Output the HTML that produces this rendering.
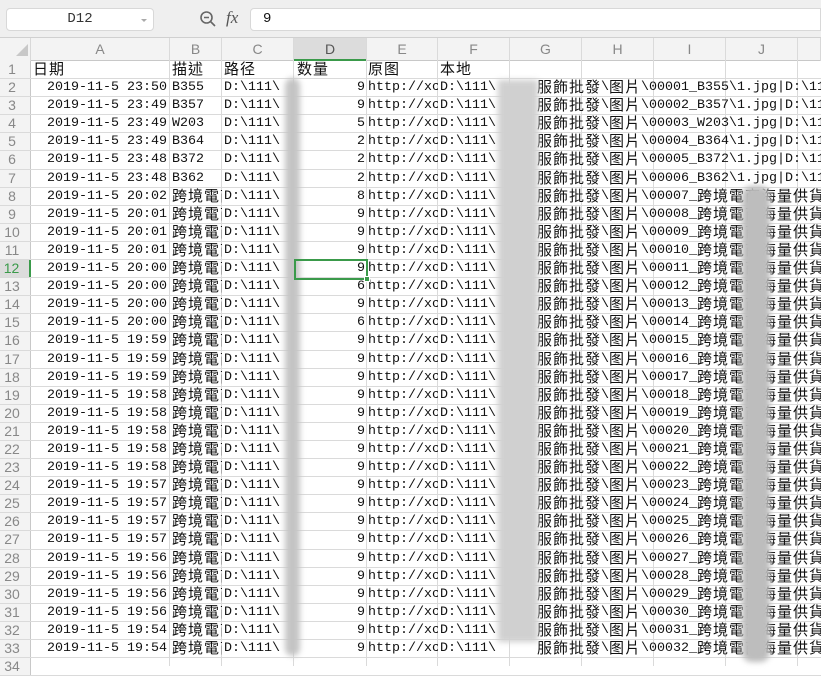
<!DOCTYPE html>
<html><head><meta charset="utf-8"><style>
*{margin:0;padding:0;box-sizing:border-box}
body{width:821px;height:666px;overflow:hidden;background:#fff;position:relative;font-family:"Liberation Mono","Noto Sans CJK TC",monospace;font-size:13.33px;color:#111}
.top{position:absolute;left:0;top:0;width:821px;height:38px;background:#efefef;border-bottom:1px solid #d0d0d0}
.nb{position:absolute;left:6px;top:8px;width:148px;height:23px;background:#fff;border:1px solid #d8d8d8;border-radius:4px;line-height:21px;text-align:center;font-size:14px;color:#333}
.nb:after{content:"";position:absolute;right:6px;top:10px;border:3px solid transparent;border-top-color:#aaa}
.fx{position:absolute;left:226px;top:8px;font-family:"Liberation Serif",serif;font-style:italic;font-size:17px;color:#555}
.fb{position:absolute;left:250px;top:8px;width:571px;height:23px;background:#fff;border:1px solid #d8d8d8;border-radius:4px 0 0 4px;line-height:21px;padding-left:12px;font-size:14px}
.hd{position:absolute;left:0;top:38px;width:821px;height:23px;background:#f3f3f3;border-bottom:1px solid #c8c8c8}
.hd span{position:absolute;top:0;height:23px;line-height:22px;text-align:center;font-family:"Liberation Sans",sans-serif;font-size:14px;color:#888;border-right:1px solid #d8d8d8}
.rows{position:absolute;left:0;top:61px;width:821px}
.r{position:relative;height:18.1px;border-bottom:1px solid #dadada;line-height:17px;overflow:hidden}
.r s{position:absolute;left:0;top:0;width:31px;height:100%;background:#f3f3f3;border-right:1px solid #c8c8c8;text-decoration:none;text-align:center;font-family:"Liberation Sans",sans-serif;font-size:14px;color:#888;padding-right:6px}
.r i{position:absolute;top:0;height:17px;font-style:normal;white-space:nowrap;overflow:hidden}
.a{left:31px;width:136px;text-align:right}
.b{left:172px;width:50px}
.c{left:224px;width:70px}
.d{left:294px;width:71px;text-align:right}
.e{left:368px;width:70px}
.f{left:440px}
.r i.g{left:537px;overflow:visible}
u{text-decoration:none;font-family:"Noto Sans CJK TC",sans-serif;font-size:15px;letter-spacing:1px;line-height:1;vertical-align:top;position:relative;top:0px}
.vl{position:absolute;top:38px;width:1px;height:628px;background:#dadada}
.bl{position:absolute;filter:blur(3px);background:#c4c4c4}
</style></head><body>
<div class="top">
<div class="nb">D12</div>
<svg style="position:absolute;left:199px;top:10px" width="18" height="18" viewBox="0 0 18 18"><circle cx="7.5" cy="7.5" r="5.5" fill="none" stroke="#666" stroke-width="1.6"/><path d="M11.5 11.5L16 16M5 7.5h5" stroke="#666" stroke-width="1.6"/></svg>
<div class="fx">fx</div>
<div class="fb">9</div>
</div>
<div class="hd">
<span style="left:0;width:31px;background:#f3f3f3"></span>
<span style="left:31px;width:139px">A</span><span style="left:170px;width:52px">B</span><span style="left:222px;width:72px">C</span><span style="left:294px;width:73px;background:#dcdcdc;color:#555;border-bottom:2px solid #3a9a4a">D</span><span style="left:367px;width:71px">E</span><span style="left:438px;width:72px">F</span><span style="left:510px;width:72px">G</span><span style="left:582px;width:72px">H</span><span style="left:654px;width:72px">I</span><span style="left:726px;width:72px">J</span><span style="left:798px;width:23px"></span>
</div>
<svg style="position:absolute;left:16px;top:44px" width="12" height="12"><path d="M12 0V12H0Z" fill="#c8c8c8"/></svg>
<div class="vl" style="left:169px"></div><div class="vl" style="left:221px"></div><div class="vl" style="left:293px"></div><div class="vl" style="left:366px"></div><div class="vl" style="left:437px"></div><div class="vl" style="left:509px"></div><div class="vl" style="left:581px"></div><div class="vl" style="left:653px"></div><div class="vl" style="left:725px"></div><div class="vl" style="left:797px"></div>
<div class="rows">
<div class="r"><s>1</s><i style="left:33px"><u>日期</u></i><i class="b"><u>描述</u></i><i class="c"><u>路径</u></i><i style="left:297px"><u>数量</u></i><i class="e"><u>原图</u></i><i class="f"><u>本地</u></i></div>
<div class="r"><s>2</s><i class="a">2019-11-5 23:50</i><i class="b">B355</i><i class="c">D:\111\</i><i class="d">9</i><i class="e">http://xc</i><i class="f">D:\111\</i><i class="g"><u>服飾批發</u>\<u>图片</u>\00001_B355\1.jpg|D:\111\</i></div>
<div class="r"><s>3</s><i class="a">2019-11-5 23:49</i><i class="b">B357</i><i class="c">D:\111\</i><i class="d">9</i><i class="e">http://xc</i><i class="f">D:\111\</i><i class="g"><u>服飾批發</u>\<u>图片</u>\00002_B357\1.jpg|D:\111\</i></div>
<div class="r"><s>4</s><i class="a">2019-11-5 23:49</i><i class="b">W203</i><i class="c">D:\111\</i><i class="d">5</i><i class="e">http://xc</i><i class="f">D:\111\</i><i class="g"><u>服飾批發</u>\<u>图片</u>\00003_W203\1.jpg|D:\111\</i></div>
<div class="r"><s>5</s><i class="a">2019-11-5 23:49</i><i class="b">B364</i><i class="c">D:\111\</i><i class="d">2</i><i class="e">http://xc</i><i class="f">D:\111\</i><i class="g"><u>服飾批發</u>\<u>图片</u>\00004_B364\1.jpg|D:\111\</i></div>
<div class="r"><s>6</s><i class="a">2019-11-5 23:48</i><i class="b">B372</i><i class="c">D:\111\</i><i class="d">2</i><i class="e">http://xc</i><i class="f">D:\111\</i><i class="g"><u>服飾批發</u>\<u>图片</u>\00005_B372\1.jpg|D:\111\</i></div>
<div class="r"><s>7</s><i class="a">2019-11-5 23:48</i><i class="b">B362</i><i class="c">D:\111\</i><i class="d">2</i><i class="e">http://xc</i><i class="f">D:\111\</i><i class="g"><u>服飾批發</u>\<u>图片</u>\00006_B362\1.jpg|D:\111\</i></div>
<div class="r"><s>8</s><i class="a">2019-11-5 20:02</i><i class="b"><u>跨境電商</u></i><i class="c">D:\111\</i><i class="d">8</i><i class="e">http://xc</i><i class="f">D:\111\</i><i class="g"><u>服飾批發</u>\<u>图片</u>\00007_<u>跨境電商海量供貨渠</u></i></div>
<div class="r"><s>9</s><i class="a">2019-11-5 20:01</i><i class="b"><u>跨境電商</u></i><i class="c">D:\111\</i><i class="d">9</i><i class="e">http://xc</i><i class="f">D:\111\</i><i class="g"><u>服飾批發</u>\<u>图片</u>\00008_<u>跨境電商海量供貨渠</u></i></div>
<div class="r"><s>10</s><i class="a">2019-11-5 20:01</i><i class="b"><u>跨境電商</u></i><i class="c">D:\111\</i><i class="d">9</i><i class="e">http://xc</i><i class="f">D:\111\</i><i class="g"><u>服飾批發</u>\<u>图片</u>\00009_<u>跨境電商海量供貨渠</u></i></div>
<div class="r"><s>11</s><i class="a">2019-11-5 20:01</i><i class="b"><u>跨境電商</u></i><i class="c">D:\111\</i><i class="d">9</i><i class="e">http://xc</i><i class="f">D:\111\</i><i class="g"><u>服飾批發</u>\<u>图片</u>\00010_<u>跨境電商海量供貨渠</u></i></div>
<div class="r"><s style="background:#dcdcdc;color:#3a9a4a;border-right:2px solid #3a9a4a">12</s><i class="a">2019-11-5 20:00</i><i class="b"><u>跨境電商</u></i><i class="c">D:\111\</i><i class="d">9</i><i class="e">http://xc</i><i class="f">D:\111\</i><i class="g"><u>服飾批發</u>\<u>图片</u>\00011_<u>跨境電商海量供貨渠</u></i></div>
<div class="r"><s>13</s><i class="a">2019-11-5 20:00</i><i class="b"><u>跨境電商</u></i><i class="c">D:\111\</i><i class="d">6</i><i class="e">http://xc</i><i class="f">D:\111\</i><i class="g"><u>服飾批發</u>\<u>图片</u>\00012_<u>跨境電商海量供貨渠</u></i></div>
<div class="r"><s>14</s><i class="a">2019-11-5 20:00</i><i class="b"><u>跨境電商</u></i><i class="c">D:\111\</i><i class="d">9</i><i class="e">http://xc</i><i class="f">D:\111\</i><i class="g"><u>服飾批發</u>\<u>图片</u>\00013_<u>跨境電商海量供貨渠</u></i></div>
<div class="r"><s>15</s><i class="a">2019-11-5 20:00</i><i class="b"><u>跨境電商</u></i><i class="c">D:\111\</i><i class="d">6</i><i class="e">http://xc</i><i class="f">D:\111\</i><i class="g"><u>服飾批發</u>\<u>图片</u>\00014_<u>跨境電商海量供貨渠</u></i></div>
<div class="r"><s>16</s><i class="a">2019-11-5 19:59</i><i class="b"><u>跨境電商</u></i><i class="c">D:\111\</i><i class="d">9</i><i class="e">http://xc</i><i class="f">D:\111\</i><i class="g"><u>服飾批發</u>\<u>图片</u>\00015_<u>跨境電商海量供貨渠</u></i></div>
<div class="r"><s>17</s><i class="a">2019-11-5 19:59</i><i class="b"><u>跨境電商</u></i><i class="c">D:\111\</i><i class="d">9</i><i class="e">http://xc</i><i class="f">D:\111\</i><i class="g"><u>服飾批發</u>\<u>图片</u>\00016_<u>跨境電商海量供貨渠</u></i></div>
<div class="r"><s>18</s><i class="a">2019-11-5 19:59</i><i class="b"><u>跨境電商</u></i><i class="c">D:\111\</i><i class="d">9</i><i class="e">http://xc</i><i class="f">D:\111\</i><i class="g"><u>服飾批發</u>\<u>图片</u>\00017_<u>跨境電商海量供貨渠</u></i></div>
<div class="r"><s>19</s><i class="a">2019-11-5 19:58</i><i class="b"><u>跨境電商</u></i><i class="c">D:\111\</i><i class="d">9</i><i class="e">http://xc</i><i class="f">D:\111\</i><i class="g"><u>服飾批發</u>\<u>图片</u>\00018_<u>跨境電商海量供貨渠</u></i></div>
<div class="r"><s>20</s><i class="a">2019-11-5 19:58</i><i class="b"><u>跨境電商</u></i><i class="c">D:\111\</i><i class="d">9</i><i class="e">http://xc</i><i class="f">D:\111\</i><i class="g"><u>服飾批發</u>\<u>图片</u>\00019_<u>跨境電商海量供貨渠</u></i></div>
<div class="r"><s>21</s><i class="a">2019-11-5 19:58</i><i class="b"><u>跨境電商</u></i><i class="c">D:\111\</i><i class="d">9</i><i class="e">http://xc</i><i class="f">D:\111\</i><i class="g"><u>服飾批發</u>\<u>图片</u>\00020_<u>跨境電商海量供貨渠</u></i></div>
<div class="r"><s>22</s><i class="a">2019-11-5 19:58</i><i class="b"><u>跨境電商</u></i><i class="c">D:\111\</i><i class="d">9</i><i class="e">http://xc</i><i class="f">D:\111\</i><i class="g"><u>服飾批發</u>\<u>图片</u>\00021_<u>跨境電商海量供貨渠</u></i></div>
<div class="r"><s>23</s><i class="a">2019-11-5 19:58</i><i class="b"><u>跨境電商</u></i><i class="c">D:\111\</i><i class="d">9</i><i class="e">http://xc</i><i class="f">D:\111\</i><i class="g"><u>服飾批發</u>\<u>图片</u>\00022_<u>跨境電商海量供貨渠</u></i></div>
<div class="r"><s>24</s><i class="a">2019-11-5 19:57</i><i class="b"><u>跨境電商</u></i><i class="c">D:\111\</i><i class="d">9</i><i class="e">http://xc</i><i class="f">D:\111\</i><i class="g"><u>服飾批發</u>\<u>图片</u>\00023_<u>跨境電商海量供貨渠</u></i></div>
<div class="r"><s>25</s><i class="a">2019-11-5 19:57</i><i class="b"><u>跨境電商</u></i><i class="c">D:\111\</i><i class="d">9</i><i class="e">http://xc</i><i class="f">D:\111\</i><i class="g"><u>服飾批發</u>\<u>图片</u>\00024_<u>跨境電商海量供貨渠</u></i></div>
<div class="r"><s>26</s><i class="a">2019-11-5 19:57</i><i class="b"><u>跨境電商</u></i><i class="c">D:\111\</i><i class="d">9</i><i class="e">http://xc</i><i class="f">D:\111\</i><i class="g"><u>服飾批發</u>\<u>图片</u>\00025_<u>跨境電商海量供貨渠</u></i></div>
<div class="r"><s>27</s><i class="a">2019-11-5 19:57</i><i class="b"><u>跨境電商</u></i><i class="c">D:\111\</i><i class="d">9</i><i class="e">http://xc</i><i class="f">D:\111\</i><i class="g"><u>服飾批發</u>\<u>图片</u>\00026_<u>跨境電商海量供貨渠</u></i></div>
<div class="r"><s>28</s><i class="a">2019-11-5 19:56</i><i class="b"><u>跨境電商</u></i><i class="c">D:\111\</i><i class="d">9</i><i class="e">http://xc</i><i class="f">D:\111\</i><i class="g"><u>服飾批發</u>\<u>图片</u>\00027_<u>跨境電商海量供貨渠</u></i></div>
<div class="r"><s>29</s><i class="a">2019-11-5 19:56</i><i class="b"><u>跨境電商</u></i><i class="c">D:\111\</i><i class="d">9</i><i class="e">http://xc</i><i class="f">D:\111\</i><i class="g"><u>服飾批發</u>\<u>图片</u>\00028_<u>跨境電商海量供貨渠</u></i></div>
<div class="r"><s>30</s><i class="a">2019-11-5 19:56</i><i class="b"><u>跨境電商</u></i><i class="c">D:\111\</i><i class="d">9</i><i class="e">http://xc</i><i class="f">D:\111\</i><i class="g"><u>服飾批發</u>\<u>图片</u>\00029_<u>跨境電商海量供貨渠</u></i></div>
<div class="r"><s>31</s><i class="a">2019-11-5 19:56</i><i class="b"><u>跨境電商</u></i><i class="c">D:\111\</i><i class="d">9</i><i class="e">http://xc</i><i class="f">D:\111\</i><i class="g"><u>服飾批發</u>\<u>图片</u>\00030_<u>跨境電商海量供貨渠</u></i></div>
<div class="r"><s>32</s><i class="a">2019-11-5 19:54</i><i class="b"><u>跨境電商</u></i><i class="c">D:\111\</i><i class="d">9</i><i class="e">http://xc</i><i class="f">D:\111\</i><i class="g"><u>服飾批發</u>\<u>图片</u>\00031_<u>跨境電商海量供貨渠</u></i></div>
<div class="r"><s>33</s><i class="a">2019-11-5 19:54</i><i class="b"><u>跨境電商</u></i><i class="c">D:\111\</i><i class="d">9</i><i class="e">http://xc</i><i class="f">D:\111\</i><i class="g"><u>服飾批發</u>\<u>图片</u>\00032_<u>跨境電商海量供貨渠</u></i></div>
<div class="r"><s>34</s></div>
</div>
<div class="bl" style="left:285px;top:78px;width:15px;height:578px;border-radius:8px"></div>
<div class="bl" style="left:498px;top:80px;width:40px;height:562px;background:#d0d0d0"></div>
<div class="bl" style="left:742px;top:186px;width:28px;height:476px;background:#bdbdbd;border-radius:10px"></div>
<div style="position:absolute;left:294px;top:259px;width:74px;height:21px;border:2px solid #3a9a4a"></div>
<div style="position:absolute;left:364px;top:276px;width:6px;height:6px;background:#3a9a4a;border:1px solid #fff"></div>
</body></html>
